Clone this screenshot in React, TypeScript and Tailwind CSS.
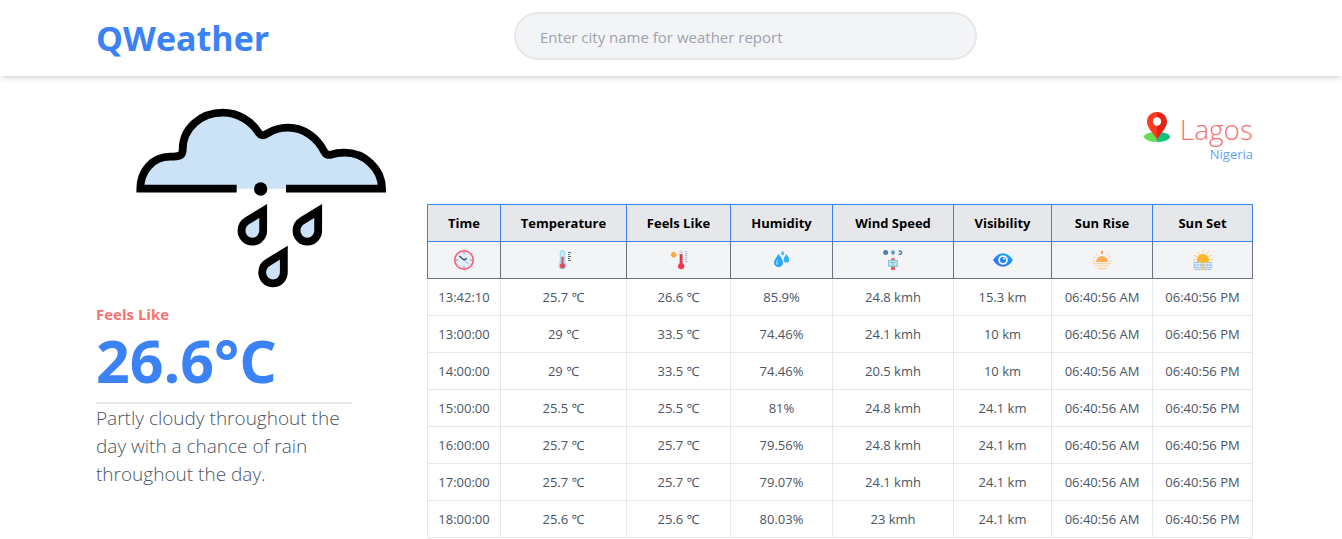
import React from "react";

type IconProps = { children: React.ReactNode };

function CellIcon({ children }: IconProps) {
  return (
    <svg viewBox="0 0 60 60" className="mx-auto block size-5" aria-hidden="true">
      {children}
    </svg>
  );
}

function ClockIcon() {
  return (
    <CellIcon>
      <circle cx="30" cy="30" r="27.5" fill="#e3f0fb" stroke="#ff5d7d" strokeWidth="5" />
      <path d="M30 7v5M30 48v5M7 30h5M48 30h5" stroke="#5d7f9e" strokeWidth="3" />
      <path d="M30 30 44 42" stroke="#62c4ee" strokeWidth="3" />
      <path d="M16 18 30 30 38 25" fill="none" stroke="#2d4763" strokeWidth="4" />
    </CellIcon>
  );
}

function ThermometerIcon() {
  return (
    <CellIcon>
      <path d="M17 8a8.5 8.5 0 0 1 17 0v29a12.500 12.500 0 1 1-17 0z" fill="#a9dcf2" />
      <path d="M22 9a3.5 3.5 0 0 1 7 0v12h-7z" fill="#d3effa" />
      <path d="M22.500 20h6v20a8 8 0 1 1-6 0z" fill="#dc4a5c" />
      <path d="M42 7.500h9M42 13.500h6M42 19.500h9M42 25.500h6M42 31.500h9" stroke="#5b7083" strokeWidth="3" />
    </CellIcon>
  );
}

function FeelsLikeIcon() {
  return (
    <CellIcon>
      <circle cx="14" cy="14" r="7.500" fill="#ff9f2e" stroke="#f7aa4f" strokeWidth="3" strokeDasharray="3 1.500" />
      <circle cx="14" cy="14" r="3.500" fill="#ffc14d" />
      <path d="M30 7a6.500 6.500 0 0 1 13 0v32a10.500 10.500 0 1 1-13 0z" fill="#d8dade" />
      <path d="M32.500 13h8v28a9 9 0 1 1-8 0z" fill="#e2364c" />
      <circle cx="36.500" cy="48" r="8.500" fill="#ff3450" />
      <path d="M48 5h5M50 11h5M48 17h5M50 23h5M48 29h5M50 35h5" stroke="#6d9bb4" strokeWidth="2.500" />
    </CellIcon>
  );
}

function HumidityIcon() {
  return (
    <CellIcon>
      <path d="M20 12C25 20 33 29 33 38a13.500 13.500 0 0 1-27 0C6 29 15 20 20 12z" fill="#29a9f5" />
      <path d="M18 27c-4 6-6 8-6 13q1 5 5 6-2-9 1-19z" fill="#a5dcfb" />
      <path d="M43 12c4 6 9 11 9 17a8.500 8.500 0 0 1-17 0c0-6 5-11 8-17z" fill="#38b1f7" />
      <path d="M32 2c3 4 5 5 5 9a5 5 0 0 1-10 0c0-4 3-5 5-9z" fill="#55bdf8" />
    </CellIcon>
  );
}

function WindIcon() {
  return (
    <CellIcon>
      <circle cx="8" cy="7.500" r="7.500" fill="#4f80a8" />
      <ellipse cx="30" cy="7.500" rx="5.500" ry="7" fill="#6398bd" />
      <path d="M47 4.500a5 5 0 1 1 0 7" fill="none" stroke="#4f80a8" strokeWidth="4.500" />
      <path d="M30 15v10" stroke="#cfe3ef" strokeWidth="3" />
      <path d="M24 25h12v35H24z" fill="#e0616c" />
      <path d="M17 32h26v16H17z" fill="#d6effb" stroke="#84cbe0" strokeWidth="4" />
      <path d="M22 37h16M25 42h10" stroke="#6ba7bd" strokeWidth="2.500" />
    </CellIcon>
  );
}

function EyeIcon() {
  return (
    <CellIcon>
      <defs>
        <linearGradient id="eye-fill" x1="0" y1="1" x2="1" y2="0">
          <stop offset="0" stopColor="#4b5bff" />
          <stop offset="0.500" stopColor="#1e86ff" />
          <stop offset="1" stopColor="#18b9ff" />
        </linearGradient>
      </defs>
      <path d="M0 30Q12 10 30 10T60 30Q48 50 30 50T0 30z" fill="url(#eye-fill)" />
      <circle cx="30" cy="30" r="14.500" fill="#e6f4ff" />
      <circle cx="30" cy="30" r="9" fill="#2380f8" />
      <circle cx="33.500" cy="26" r="3.500" fill="#d5ebff" />
    </CellIcon>
  );
}

function SunriseIcon() {
  return (
    <CellIcon>
      <path d="M12 36a18 18 0 0 1 36 0z" fill="#ffaf5c" />
      <path d="M3 41h54M9 48h42" stroke="#ffd79c" strokeWidth="3.500" />
      <path d="M17 56h26" stroke="#ffca84" strokeWidth="3.500" />
      <path d="m12 11 3 5M48 11l-3 5M4 20l5 3M56 20l-5 3M2 33h5M53 33h5" stroke="#ffc98c" strokeWidth="3" />
      <path d="M30 2v10" stroke="#f9ae66" strokeWidth="4" />
      <circle cx="30" cy="7" r="3.500" fill="#f7a25b" />
    </CellIcon>
  );
}

function SunsetIcon() {
  return (
    <CellIcon>
      <path d="M30 0v8M14 5l4 8M46 5l-4 8M4 16l8 4M56 16l-8 4M0 29h10M60 29H50" stroke="#f7cc70" strokeWidth="3" />
      <path d="M12 36V29a18 18 0 0 1 36 0v7z" fill="#fcb82f" />
      <path d="M1 38h58M1 45h58M1 52h58M5 58h50" stroke="#94c0f0" strokeWidth="4" strokeDasharray="8 1.500" />
      <path d="M24 38h12M26 45h8M26 52h8M27 58h6" stroke="#fac14c" strokeWidth="5" />
    </CellIcon>
  );
}

function RainCloud() {
  const drop = "M429.500 360V419.500A32.500 32.500 0 1 1 364.500 419.500C364.500 406 372 395 382 389Z";
  return (
    <svg
      viewBox="48 51 750 540"
      className="ml-10 block h-[180px] w-[250px]"
      role="img"
      aria-label="Rain cloud"
      stroke="#000"
      strokeWidth="23.500"
      fill="#cce2f6"
    >
      <path
        d="M350 293H61C61 240 98 197 150 197C176 197 188 196 188 176C188 112 242 65 309 65C354 65 395 91 415 124Q426 139 441 128C460 116 480 110 504 110C552 110 592 140 613 182Q619 194 632 191C644 187 656 185 674 185C732 185 786 232 786 293H498"
      />
      <circle cx="422" cy="294" r="20" fill="#000" stroke="none" />
      <path d={drop} />
      <path d={drop} transform="translate(165 0)" />
      <path d={drop} transform="translate(62 125)" />
    </svg>
  );
}

function MapPin() {
  return (
    <svg viewBox="0 0 90 90" className="size-[30px]" aria-hidden="true">
      <path d="M45 59a39 15.500 0 0 0 0 31z" fill="#66dd56" />
      <path d="M45 59a39 15.500 0 0 1 0 31z" fill="#14c27e" />
      <path d="M45 0C27 0 15 13 15 29c0 19 20 34 30 54V0z" fill="#ff3a20" />
      <path d="M45 0c18 0 30 13 30 29 0 19-20 34-30 54V0z" fill="#e62214" />
      <circle cx="45" cy="28.500" r="12.500" fill="#fff" />
    </svg>
  );
}

const columns = [
  { title: "Time", width: "w-[73px]", Icon: ClockIcon },
  { title: "Temperature", width: "w-[126px]", Icon: ThermometerIcon },
  { title: "Feels Like", width: "w-[104px]", Icon: FeelsLikeIcon },
  { title: "Humidity", width: "w-[102px]", Icon: HumidityIcon },
  { title: "Wind Speed", width: "w-[121px]", Icon: WindIcon },
  { title: "Visibility", width: "w-[98px]", Icon: EyeIcon },
  { title: "Sun Rise", width: "w-[101px]", Icon: SunriseIcon },
  { title: "Sun Set", width: "w-[100px]", Icon: SunsetIcon },
];

const hours = [
  ["13:42:10", "25.7 ℃", "26.6 ℃", "85.9%", "24.8 kmh", "15.3 km"],
  ["13:00:00", "29 ℃", "33.5 ℃", "74.46%", "24.1 kmh", "10 km"],
  ["14:00:00", "29 ℃", "33.5 ℃", "74.46%", "20.5 kmh", "10 km"],
  ["15:00:00", "25.5 ℃", "25.5 ℃", "81%", "24.8 kmh", "24.1 km"],
  ["16:00:00", "25.7 ℃", "25.7 ℃", "79.56%", "24.8 kmh", "24.1 km"],
  ["17:00:00", "25.7 ℃", "25.7 ℃", "79.07%", "24.1 kmh", "24.1 km"],
  ["18:00:00", "25.6 ℃", "25.6 ℃", "80.03%", "23 kmh", "24.1 km"],
];

function ForecastTable() {
  return (
    <table className="w-full table-fixed border-collapse text-center">
      <colgroup>
        {columns.map((c) => (
          <col key={c.title} className={c.width} />
        ))}
      </colgroup>
      <thead>
        <tr className="bg-[#e5e7eb] text-[13px] leading-5 text-black">
          {columns.map((c) => (
            <th key={c.title} scope="col" className="border border-[#3b82f6] py-2 font-bold whitespace-nowrap">
              {c.title}
            </th>
          ))}
        </tr>
      </thead>
      <tbody className="text-[13px] leading-5 text-[#4b5563]">
        <tr className="bg-[#f3f4f6]">
          {columns.map(({ title, Icon }) => (
            <td key={title} className="border border-[#6b7280] border-t-[#3b82f6] py-2">
              <Icon />
            </td>
          ))}
        </tr>
        {hours.map((row) => (
          <tr key={row[0]}>
            {[...row, "06:40:56 AM", "06:40:56 PM"].map((value, i) => (
              <td key={i} className="border border-[#e5e7eb] py-2 whitespace-nowrap">
                {value}
              </td>
            ))}
          </tr>
        ))}
      </tbody>
    </table>
  );
}

export default function App() {
  return (
    <div className="bg-white font-['Open_Sans','Noto_Sans','Noto_Sans_CJK_SC',sans-serif]">
      <header className="flex items-start bg-white px-24 py-3 shadow-md">
        <h1 className="w-[418px] shrink-0 text-[34px] leading-[52px] font-bold text-[#3b82f6]">QWeather</h1>
        <input
          type="text"
          aria-label="City name"
          placeholder="Enter city name for weather report"
          className="h-12 w-full max-w-[463px] rounded-full border-2 border-[#e5e7eb] bg-[#f3f4f6] px-6 pt-0.5 text-[15px] text-[#4b5563] outline-none placeholder:text-[#9ca3af]"
        />
      </header>
      <main className="flex pt-8 pr-[89px] pl-24">
        <section className="w-[331px] shrink-0">
          <RainCloud />
          <h2 className="mt-4 text-[15px] leading-5 font-bold text-[#f87171]">Feels Like</h2>
          <p className="text-[59px] leading-[72px] font-bold text-[#3b82f6]">26.6°C</p>
          <p className="mt-1.5 w-64 border-t-2 border-[#e5e7eb] text-[19px] leading-7 font-light text-[#4b5563]">
            Partly cloudy throughout the day with a chance of rain throughout the day.
          </p>
        </section>
        <section className="min-w-0 flex-1">
          <div className="mb-[42px] flex flex-col items-end">
            <div className="flex items-start gap-2 pt-1">
              <MapPin />
              <h2 className="text-[28px] leading-[34px] font-light text-[#f87171]">Lagos</h2>
            </div>
            <p className="text-[13px] leading-4 text-[#60a5fa]">Nigeria</p>
          </div>
          <ForecastTable />
        </section>
      </main>
    </div>
  );
}
